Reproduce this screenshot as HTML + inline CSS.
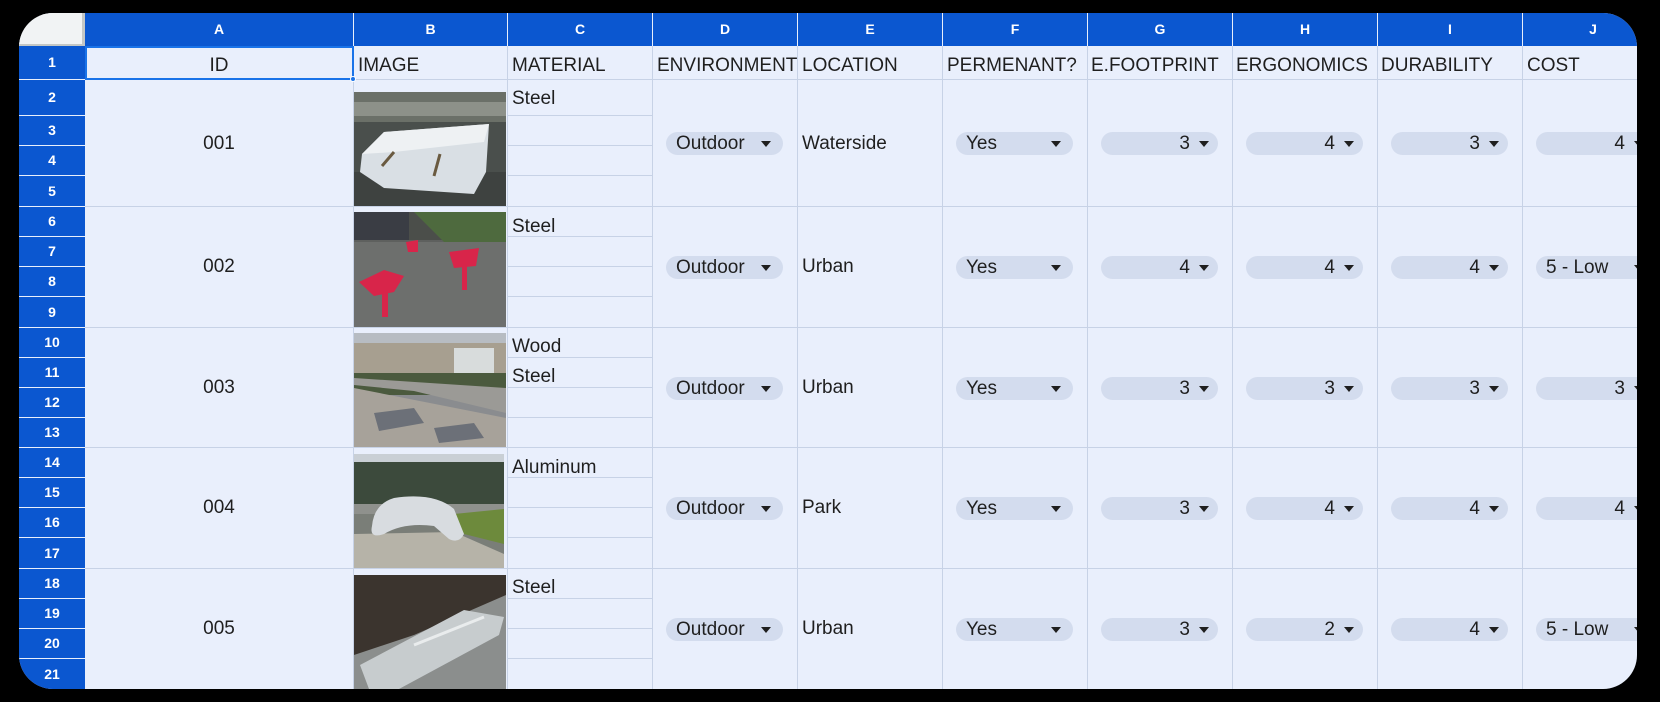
<!DOCTYPE html>
<html><head><meta charset="utf-8"><style>
*{margin:0;padding:0;box-sizing:border-box}
body{width:1660px;height:702px;background:#000;overflow:hidden;font-family:"Liberation Sans",Arial,sans-serif;color:#1f1f1f}
#s{position:absolute;left:19px;top:13px;width:1618px;height:676px;border-radius:34px;overflow:hidden;background:#e9effc}
.a{position:absolute}
.h{position:absolute;top:0;height:33px;background:#0b57d0;color:#fff;font-weight:bold;font-size:14px;line-height:33px;text-align:center}
.r{position:absolute;left:0;width:66px;background:#0b57d0;color:#fff;font-weight:bold;font-size:14px;text-align:center}
.v{position:absolute;width:1px;background:#c7d2e6}
.hl{position:absolute;height:1px;background:#c7d2e6}
.t{position:absolute;font-size:19px;line-height:20px;white-space:nowrap}
.chip{position:absolute;height:23px;border-radius:12px;background:#d3dcee;font-size:19px;line-height:23px;white-space:nowrap}
.ar{position:absolute;top:9px;width:0;height:0;border-left:5px solid transparent;border-right:5px solid transparent;border-top:6px solid #1f1f1f}
.img{position:absolute;left:335px;width:152px;overflow:hidden}
</style></head><body>
<div id="s">
<div class="a" style="left:0;top:0;width:66px;height:33px;background:#f1f3f4"></div>
<div class="a" style="left:0;top:31px;width:66px;height:2px;background:#c4c7c5"></div>
<div class="a" style="left:63px;top:0;width:3px;height:33px;background:#c4c7c5"></div>
<div class="h" style="left:66px;width:268px">A</div>
<div class="h" style="left:335px;width:153px">B</div>
<div class="h" style="left:489px;width:144px">C</div>
<div class="h" style="left:634px;width:144px">D</div>
<div class="h" style="left:779px;width:144px">E</div>
<div class="h" style="left:924px;width:144px">F</div>
<div class="h" style="left:1069px;width:144px">G</div>
<div class="h" style="left:1214px;width:144px">H</div>
<div class="h" style="left:1359px;width:144px">I</div>
<div class="h" style="left:1504px;width:140px">J</div>
<div class="r" style="top:33px;height:33px;line-height:33px">1</div>
<div class="r" style="top:67px;height:35px;line-height:35px">2</div>
<div class="r" style="top:103px;height:29px;line-height:29px">3</div>
<div class="r" style="top:133px;height:29px;line-height:29px">4</div>
<div class="r" style="top:163px;height:30px;line-height:30px">5</div>
<div class="r" style="top:194px;height:29px;line-height:29px">6</div>
<div class="r" style="top:224px;height:29px;line-height:29px">7</div>
<div class="r" style="top:254px;height:29px;line-height:29px">8</div>
<div class="r" style="top:284px;height:30px;line-height:30px">9</div>
<div class="r" style="top:315px;height:29px;line-height:29px">10</div>
<div class="r" style="top:345px;height:29px;line-height:29px">11</div>
<div class="r" style="top:375px;height:29px;line-height:29px">12</div>
<div class="r" style="top:405px;height:29px;line-height:29px">13</div>
<div class="r" style="top:435px;height:29px;line-height:29px">14</div>
<div class="r" style="top:465px;height:29px;line-height:29px">15</div>
<div class="r" style="top:495px;height:29px;line-height:29px">16</div>
<div class="r" style="top:525px;height:30px;line-height:30px">17</div>
<div class="r" style="top:556px;height:29px;line-height:29px">18</div>
<div class="r" style="top:586px;height:29px;line-height:29px">19</div>
<div class="r" style="top:616px;height:29px;line-height:29px">20</div>
<div class="r" style="top:646px;height:30px;line-height:30px">21</div>

<div class="v" style="left:334px;top:33px;height:643px"></div>
<div class="v" style="left:488px;top:33px;height:643px"></div>
<div class="v" style="left:633px;top:33px;height:643px"></div>
<div class="v" style="left:778px;top:33px;height:643px"></div>
<div class="v" style="left:923px;top:33px;height:643px"></div>
<div class="v" style="left:1068px;top:33px;height:643px"></div>
<div class="v" style="left:1213px;top:33px;height:643px"></div>
<div class="v" style="left:1358px;top:33px;height:643px"></div>
<div class="v" style="left:1503px;top:33px;height:643px"></div>
<div class="hl" style="left:66px;top:66px;width:1560px"></div>
<div class="hl" style="left:66px;top:193px;width:1560px"></div>
<div class="hl" style="left:66px;top:314px;width:1560px"></div>
<div class="hl" style="left:66px;top:434px;width:1560px"></div>
<div class="hl" style="left:66px;top:555px;width:1560px"></div>
<div class="hl" style="left:489px;top:102px;width:144px"></div>
<div class="hl" style="left:489px;top:132px;width:144px"></div>
<div class="hl" style="left:489px;top:162px;width:144px"></div>
<div class="hl" style="left:489px;top:223px;width:144px"></div>
<div class="hl" style="left:489px;top:253px;width:144px"></div>
<div class="hl" style="left:489px;top:283px;width:144px"></div>
<div class="hl" style="left:489px;top:344px;width:144px"></div>
<div class="hl" style="left:489px;top:374px;width:144px"></div>
<div class="hl" style="left:489px;top:404px;width:144px"></div>
<div class="hl" style="left:489px;top:464px;width:144px"></div>
<div class="hl" style="left:489px;top:494px;width:144px"></div>
<div class="hl" style="left:489px;top:524px;width:144px"></div>
<div class="hl" style="left:489px;top:585px;width:144px"></div>
<div class="hl" style="left:489px;top:615px;width:144px"></div>
<div class="hl" style="left:489px;top:645px;width:144px"></div>

<div class="a" style="left:66px;top:33px;width:269px;height:34px;border:2px solid #1a73e8"></div>
<div class="a" style="left:331px;top:63px;width:6px;height:6px;background:#1a73e8;border-radius:50%;border:1px solid #fff"></div>
<div class="t" style="left:66px;width:268px;text-align:center;top:43px">ID</div>
<div class="t" style="left:339px;top:43px">IMAGE</div>
<div class="t" style="left:493px;top:43px">MATERIAL</div>
<div class="t" style="left:638px;top:43px;width:140px;overflow:hidden">ENVIRONMENT</div>
<div class="t" style="left:783px;top:43px">LOCATION</div>
<div class="t" style="left:928px;top:43px">PERMENANT?</div>
<div class="t" style="left:1072px;top:43px">E.FOOTPRINT</div>
<div class="t" style="left:1217px;top:43px">ERGONOMICS</div>
<div class="t" style="left:1362px;top:43px">DURABILITY</div>
<div class="t" style="left:1508px;top:43px">COST</div>

<div class="t" style="left:66px;width:268px;text-align:center;top:121px">001</div>
<div class="t" style="left:66px;width:268px;text-align:center;top:244px">002</div>
<div class="t" style="left:66px;width:268px;text-align:center;top:365px">003</div>
<div class="t" style="left:66px;width:268px;text-align:center;top:485px">004</div>
<div class="t" style="left:66px;width:268px;text-align:center;top:606px">005</div>

<div class="t" style="left:493px;top:76px">Steel</div>
<div class="t" style="left:493px;top:204px">Steel</div>
<div class="t" style="left:493px;top:324px">Wood</div>
<div class="t" style="left:493px;top:354px">Steel</div>
<div class="t" style="left:493px;top:445px">Aluminum</div>
<div class="t" style="left:493px;top:565px">Steel</div>

<div class="t" style="left:783px;top:121px">Waterside</div>
<div class="t" style="left:783px;top:244px">Urban</div>
<div class="t" style="left:783px;top:365px">Urban</div>
<div class="t" style="left:783px;top:485px">Park</div>
<div class="t" style="left:783px;top:606px">Urban</div>

<div class="chip" style="left:647px;width:117px;top:119px"><span style="position:absolute;left:10px">Outdoor</span><i class="ar" style="left:95px"></i></div>
<div class="chip" style="left:647px;width:117px;top:243px"><span style="position:absolute;left:10px">Outdoor</span><i class="ar" style="left:95px"></i></div>
<div class="chip" style="left:647px;width:117px;top:364px"><span style="position:absolute;left:10px">Outdoor</span><i class="ar" style="left:95px"></i></div>
<div class="chip" style="left:647px;width:117px;top:484px"><span style="position:absolute;left:10px">Outdoor</span><i class="ar" style="left:95px"></i></div>
<div class="chip" style="left:647px;width:117px;top:605px"><span style="position:absolute;left:10px">Outdoor</span><i class="ar" style="left:95px"></i></div>
<div class="chip" style="left:937px;width:117px;top:119px"><span style="position:absolute;left:10px">Yes</span><i class="ar" style="left:95px"></i></div>
<div class="chip" style="left:937px;width:117px;top:243px"><span style="position:absolute;left:10px">Yes</span><i class="ar" style="left:95px"></i></div>
<div class="chip" style="left:937px;width:117px;top:364px"><span style="position:absolute;left:10px">Yes</span><i class="ar" style="left:95px"></i></div>
<div class="chip" style="left:937px;width:117px;top:484px"><span style="position:absolute;left:10px">Yes</span><i class="ar" style="left:95px"></i></div>
<div class="chip" style="left:937px;width:117px;top:605px"><span style="position:absolute;left:10px">Yes</span><i class="ar" style="left:95px"></i></div>
<div class="chip" style="left:1082px;width:117px;top:119px"><span style="position:absolute;right:28px">3</span><i class="ar" style="left:98px"></i></div>
<div class="chip" style="left:1082px;width:117px;top:243px"><span style="position:absolute;right:28px">4</span><i class="ar" style="left:98px"></i></div>
<div class="chip" style="left:1082px;width:117px;top:364px"><span style="position:absolute;right:28px">3</span><i class="ar" style="left:98px"></i></div>
<div class="chip" style="left:1082px;width:117px;top:484px"><span style="position:absolute;right:28px">3</span><i class="ar" style="left:98px"></i></div>
<div class="chip" style="left:1082px;width:117px;top:605px"><span style="position:absolute;right:28px">3</span><i class="ar" style="left:98px"></i></div>
<div class="chip" style="left:1227px;width:117px;top:119px"><span style="position:absolute;right:28px">4</span><i class="ar" style="left:98px"></i></div>
<div class="chip" style="left:1227px;width:117px;top:243px"><span style="position:absolute;right:28px">4</span><i class="ar" style="left:98px"></i></div>
<div class="chip" style="left:1227px;width:117px;top:364px"><span style="position:absolute;right:28px">3</span><i class="ar" style="left:98px"></i></div>
<div class="chip" style="left:1227px;width:117px;top:484px"><span style="position:absolute;right:28px">4</span><i class="ar" style="left:98px"></i></div>
<div class="chip" style="left:1227px;width:117px;top:605px"><span style="position:absolute;right:28px">2</span><i class="ar" style="left:98px"></i></div>
<div class="chip" style="left:1372px;width:117px;top:119px"><span style="position:absolute;right:28px">3</span><i class="ar" style="left:98px"></i></div>
<div class="chip" style="left:1372px;width:117px;top:243px"><span style="position:absolute;right:28px">4</span><i class="ar" style="left:98px"></i></div>
<div class="chip" style="left:1372px;width:117px;top:364px"><span style="position:absolute;right:28px">3</span><i class="ar" style="left:98px"></i></div>
<div class="chip" style="left:1372px;width:117px;top:484px"><span style="position:absolute;right:28px">4</span><i class="ar" style="left:98px"></i></div>
<div class="chip" style="left:1372px;width:117px;top:605px"><span style="position:absolute;right:28px">4</span><i class="ar" style="left:98px"></i></div>
<div class="chip" style="left:1517px;width:117px;top:119px"><span style="position:absolute;right:28px">4</span><i class="ar" style="left:98px"></i></div>
<div class="chip" style="left:1517px;width:117px;top:243px"><span style="position:absolute;left:10px">5 - Low</span><i class="ar" style="left:98px"></i></div>
<div class="chip" style="left:1517px;width:117px;top:364px"><span style="position:absolute;right:28px">3</span><i class="ar" style="left:98px"></i></div>
<div class="chip" style="left:1517px;width:117px;top:484px"><span style="position:absolute;right:28px">4</span><i class="ar" style="left:98px"></i></div>
<div class="chip" style="left:1517px;width:117px;top:605px"><span style="position:absolute;left:10px">5 - Low</span><i class="ar" style="left:98px"></i></div>

<svg class="img" style="top:79px;height:114px" viewBox="0 0 152 114" preserveAspectRatio="none">
<rect width="152" height="114" fill="#4a4f4c"/>
<rect width="152" height="30" fill="#6b7068"/>
<rect y="10" width="152" height="14" fill="#8d9189"/>
<rect y="80" width="152" height="34" fill="#3e4240"/>
<path d="M8 62 L30 40 L135 32 L132 80 L120 102 L30 96 L6 80 Z" fill="#d9dfe4"/>
<path d="M8 62 L30 40 L135 32 L130 50 L40 60 Z" fill="#eef1f3"/>
<path d="M40 60 L28 74 M86 62 L80 84" stroke="#6a5a40" stroke-width="3"/>
</svg>
<svg class="img" style="top:199px;height:115px" viewBox="0 0 152 115" preserveAspectRatio="none">
<rect width="152" height="115" fill="#5e605e"/>
<rect width="152" height="28" fill="#4b4e4a"/>
<path d="M0 0 H55 V28 H0Z" fill="#3a3d44"/>
<path d="M60 0 H152 V40 L90 30Z" fill="#4e6a3e"/>
<rect x="0" y="30" width="152" height="85" fill="#6d6f6d"/>
<path d="M5 70 L30 58 L50 64 L40 80 L20 84Z" fill="#d8254a"/>
<rect x="28" y="80" width="6" height="25" fill="#d8254a"/>
<path d="M95 40 L125 36 L122 54 L100 56Z" fill="#d8254a"/>
<rect x="108" y="54" width="5" height="24" fill="#d8254a"/>
<path d="M52 30 L64 28 L64 40 L54 40Z" fill="#d8254a"/>
</svg>
<svg class="img" style="top:320px;height:114px" viewBox="0 0 152 114" preserveAspectRatio="none">
<rect width="152" height="114" fill="#8a8c8f"/>
<rect width="152" height="30" fill="#b7bcc2"/>
<rect y="10" width="152" height="30" fill="#a79f90"/>
<rect x="100" y="15" width="40" height="25" fill="#d8dcdc"/>
<path d="M0 40 H152 V62 H0Z" fill="#4b5a3e"/>
<path d="M0 45 L152 55 L152 80 L60 58 L0 52Z" fill="#9b9a96"/>
<path d="M0 55 L152 85 V114 H0Z" fill="#a7a29a"/>
<path d="M20 80 L60 75 L70 90 L25 98Z M80 95 L120 90 L130 105 L85 110Z" fill="#6c7078"/>
</svg>
<svg class="img" style="top:441px;height:114px;width:150px" viewBox="0 0 150 114" preserveAspectRatio="none">
<rect width="150" height="114" fill="#7a7e78"/>
<rect width="150" height="50" fill="#3c4a3c"/>
<rect y="0" width="150" height="8" fill="#c9cfd5"/>
<path d="M0 50 H150 V60 H0Z" fill="#8f918d"/>
<path d="M100 60 L150 55 V90 L110 80Z" fill="#6d8a3c"/>
<path d="M0 80 L100 78 L150 100 V114 H0Z" fill="#b6b3a8"/>
<path d="M18 72 Q20 50 40 44 Q80 38 100 55 L110 80 Q105 90 95 85 L80 72 Q50 68 30 80 Q15 85 18 72Z" fill="#d8dce0"/>
</svg>
<svg class="img" style="top:562px;height:114px" viewBox="0 0 152 114" preserveAspectRatio="none">
<rect width="152" height="114" fill="#8b8e8d"/>
<path d="M0 0 H152 V20 L60 60 L0 80Z" fill="#3b342e"/>
<path d="M6 90 L110 35 L150 42 L145 60 L45 114 H15Z" fill="#c7ccce"/>
<path d="M60 70 L130 42" stroke="#e9eced" stroke-width="3"/>
</svg>
</div>
</body></html>
